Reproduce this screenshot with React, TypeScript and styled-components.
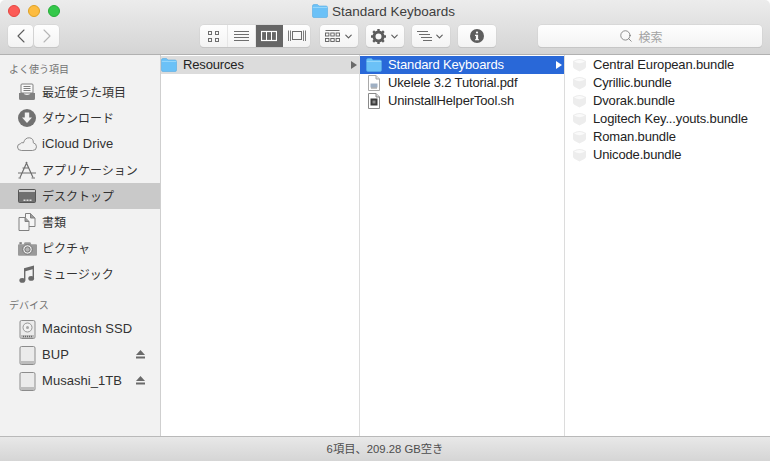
import React from 'react'
import styled, { createGlobalStyle } from 'styled-components'
import { Search, ChevronDown, ChevronLeft, ChevronRight } from 'lucide-react'

const FONT = `"Liberation Sans", "Noto Sans CJK JP", sans-serif`

const GlobalStyle = createGlobalStyle`
  html, body {
    margin: 0;
    padding: 0;
    background: #ffffff;
    overflow: hidden;
  }
  * {
    box-sizing: border-box;
  }
`
const Window = styled.div`
  width: 770px;
  height: 461px;
  display: flex;
  flex-direction: column;
  font-family: ${FONT};
  font-size: 13px;
  color: #2b2b2b;
  overflow: hidden;
`
const TitleBar = styled.div`
  height: 55px;
  flex: none;
  padding: 5px 8px 0;
  background: linear-gradient(#ececec, #d4d4d4);
  border-bottom: 1px solid #b1b1b1;
  border-radius: 5px 5px 0 0;
  display: flex;
  flex-direction: column;
`
const TitleRow = styled.div`
  height: 20px;
  padding-bottom: 8px;
  display: flex;
  align-items: center;
  position: relative;
  justify-content: center;
`
const Lights = styled.div`
  position: absolute;
  left: 0;
  top: 0;
  display: flex;
  gap: 8px;
`
const Light = styled.div<{ $color: string; $edge: string }>`
  width: 12px;
  height: 12px;
  border-radius: 50%;
  background: ${(p) => p.$color};
  border: 1px solid ${(p) => p.$edge};
`
const Title = styled.div`
  display: flex;
  align-items: center;
  gap: 4px;
  color: #3e3e3e;
  font-size: 13.5px;
  margin-left: -3px;
`
const Toolbar = styled.div`
  display: flex;
  align-items: center;
  height: 22px;
`
const Tool = styled.div<{ $w: number; $ml?: number; $muted?: boolean }>`
  width: ${(p) => p.$w}px;
  height: 22px;
  flex: none;
  margin-left: ${(p) => p.$ml ?? 0}px;
  background: linear-gradient(#fefefe, #f3f3f3);
  border-radius: 4px;
  box-shadow: 0 0 0 0.5px #cfcfcf, 0 1px 0 #bcbcbc;
  display: flex;
  align-items: center;
  justify-content: center;
  color: ${(p) => (p.$muted ? '#b5b5b5' : '#5c5c5c')};
`
const Segments = styled.div`
  display: flex;
  width: 110px;
  height: 22px;
  flex: none;
  margin-left: 141px;
  border-radius: 4px;
  overflow: hidden;
  background: linear-gradient(#fefefe, #f3f3f3);
  box-shadow: 0 0 0 0.5px #cfcfcf, 0 1px 0 #bcbcbc;
`
const Segment = styled.div<{ $on?: boolean; $w: number }>`
  width: ${(p) => p.$w}px;
  display: flex;
  align-items: center;
  justify-content: center;
  background: ${(p) => (p.$on ? '#666666' : 'transparent')};
  color: ${(p) => (p.$on ? '#ffffff' : '#6e6e6e')};
  border-right: 1px solid ${(p) => (p.$on ? '#666666' : '#e6e6e6')};
  &:last-child {
    border-right: 0;
  }
`
const Caret = styled(ChevronDown)<{ $ml: number }>`
  margin-left: ${(p) => p.$ml}px;
`
const SearchField = styled(Tool)`
  gap: 5px;
  color: #a3a3a3;
  font-size: 12px;
  padding-right: 18px;
  svg {
    color: #6d6d6d;
  }
`
const Main = styled.div`
  flex: 1;
  min-height: 0;
  display: flex;
`
const Sidebar = styled.div`
  width: 161px;
  flex: none;
  background: #f2f2f2;
  border-right: 1px solid #cfcfcf;
  padding-top: 7px;
`
const SectionHead = styled.div<{ $mt?: number; $mb?: number }>`
  height: 16px;
  line-height: 16px;
  padding-left: 9px;
  font-size: 10px;
  color: #737373;
  margin-top: ${(p) => p.$mt ?? 0}px;
  margin-bottom: ${(p) => p.$mb ?? 1}px;
`
const SideItem = styled.div<{ $on?: boolean }>`
  height: 26px;
  display: flex;
  align-items: center;
  padding-left: 17px;
  background: ${(p) => (p.$on ? '#c9c9c9' : 'transparent')};
  color: #333333;
  position: relative;
`
const SideLabel = styled.span<{ $jp?: boolean }>`
  font-size: ${(p) => (p.$jp ? 12 : 13)}px;
  letter-spacing: ${(p) => (p.$jp ? '0' : '0.05px')};
  margin-top: -2px;
`
const SideIcon = styled.span`
  width: 20px;
  height: 20px;
  margin-right: 5px;
  display: flex;
  align-items: center;
  justify-content: center;
  flex: none;
  color: #717171;
`
const Eject = styled.span`
  position: absolute;
  right: 15px;
  top: 8px;
  display: flex;
`
const Column = styled.div<{ $w: number; $last?: boolean }>`
  width: ${(p) => p.$w}px;
  flex: ${(p) => (p.$last ? 1 : 'none')};
  background: #ffffff;
  border-right: ${(p) => (p.$last ? '0' : '1px solid #dcdcdc')};
  padding-top: 1px;
`
const FileRow = styled.div<{ $sel?: 'blue' | 'gray'; $pl: number }>`
  height: 18px;
  display: flex;
  align-items: center;
  padding-left: ${(p) => p.$pl}px;
  position: relative;
  background: ${(p) => (p.$sel === 'blue' ? '#2968d8' : p.$sel === 'gray' ? '#dcdcdc' : 'transparent')};
  color: ${(p) => (p.$sel === 'blue' ? '#ffffff' : '#232323')};
  white-space: nowrap;
`
const FileName = styled.span`
  font-size: 13px;
  letter-spacing: -0.15px;
  margin-top: -2px;
`
const FileIcon = styled.span`
  width: 16px;
  height: 16px;
  flex: none;
  margin-right: 6px;
  display: flex;
  align-items: center;
  justify-content: center;
`
const Arrow = styled.span<{ $color: string }>`
  position: absolute;
  right: 2px;
  top: 5px;
  width: 0;
  height: 0;
  border-left: 6px solid ${(p) => p.$color};
  border-top: 4px solid transparent;
  border-bottom: 4px solid transparent;
`
const StatusBar = styled.div`
  height: 25px;
  flex: none;
  padding-bottom: 2px;
  border-top: 1px solid #b9b9b9;
  background: linear-gradient(#e8e8e8, #d5d5d5);
  display: flex;
  align-items: center;
  justify-content: center;
  font-size: 11.3px;
  color: #4d4d4d;
`

const FolderIcon = ({ w = 16, h = 14 }: { w?: number; h?: number }) => (
  <svg width={w} height={h} viewBox="0 0 16 14">
    <path d="M0.5 2 Q0.5 0.5 2 0.5 H5.5 L7 2 H14 Q15.5 2 15.5 3.5 V12 Q15.5 13.5 14 13.5 H2 Q0.5 13.5 0.5 12 Z" fill="#6bc1f7" stroke="#55abe4" strokeWidth="0.6" />
    <path d="M0.8 3.4 H15.2" stroke="#9bd8fb" strokeWidth="1" />
  </svg>
)
const GridIcon = () => (
  <svg width="11" height="11" viewBox="0 0 11 11" fill="none" stroke="currentColor">
    <rect x=".5" y=".5" width="3" height="3" />
    <rect x="7.5" y=".5" width="3" height="3" />
    <rect x=".5" y="7.5" width="3" height="3" />
    <rect x="7.5" y="7.5" width="3" height="3" />
  </svg>
)
const ListIcon = () => (
  <svg width="15" height="12" viewBox="0 0 15 12" stroke="currentColor">
    <path d="M0 .5H15M0 3.5H15M0 6.5H15M0 9.5H15" transform="translate(0 1)" />
  </svg>
)
const ColumnsIcon = () => (
  <svg width="16" height="12" viewBox="0 0 16 12" fill="none" stroke="currentColor">
    <rect x=".5" y="1.5" width="15" height="9" strokeWidth="1.2" />
    <path d="M5.5 1.5V10.5M10.5 1.5V10.5" />
  </svg>
)
const CoverIcon = () => (
  <svg width="20" height="12" viewBox="0 0 20 12" fill="none" stroke="currentColor">
    <rect x="5.5" y="1.5" width="9" height="8" />
    <path d="M1.5 .5V11M3.5 .5V11M16.5 .5V11M18.5 .5V11" strokeWidth=".9" />
  </svg>
)
const ArrangeIcon = () => (
  <svg width="15" height="13" viewBox="0 0 15 13" fill="none" stroke="currentColor" strokeWidth=".9">
    <path d="M.5 .5H14.5" />
    <rect x=".5" y="3" width="3.4" height="3" />
    <rect x="5.8" y="3" width="3.4" height="3" />
    <rect x="11.1" y="3" width="3.4" height="3" />
    <rect x=".5" y="8.5" width="3.4" height="3" />
    <rect x="5.8" y="8.5" width="3.4" height="3" />
    <rect x="11.1" y="8.5" width="3.4" height="3" />
  </svg>
)
const GearIcon = () => (
  <svg width="15" height="15" viewBox="0 0 15 15">
    <circle cx="7.5" cy="7.5" r="4.5" fill="none" stroke="currentColor" strokeWidth="3" />
    <path d="M7.5 0V15M0 7.5H15M2.2 2.2L12.8 12.8M12.8 2.2L2.2 12.8" stroke="currentColor" strokeWidth="2.4" strokeDasharray="2.6 9.8 2.6 0" />
  </svg>
)
const SortIcon = () => (
  <svg width="16" height="11" viewBox="0 0 16 11" stroke="currentColor" strokeWidth=".9">
    <path d="M0 .5H11M2 3.5H13M4 6.5H15M6 9.5H15" />
  </svg>
)
const InfoIcon = () => (
  <svg width="14" height="14" viewBox="0 0 14 14">
    <circle cx="7" cy="7" r="7" fill="#5e5e5e" />
    <rect x="5.9" y="2.4" width="2.2" height="2.2" rx="1" fill="#fafafa" />
    <path d="M5 5.8H8.1V10.2H9V11.3H5V10.2H5.9V6.9H5Z" fill="#fafafa" />
  </svg>
)
const RecentsIcon = () => (
  <svg width="18" height="18" viewBox="0 0 18 18">
    <path d="M4 1H14Q15 1 15 2V10H3V2Q3 1 4 1Z" fill="#fff" fillOpacity=".5" stroke="#808080" />
    <path d="M5.5 3.5H12.5M5.5 5.5H12.5M5.5 7.5H12.5" stroke="#808080" />
    <path d="M1 10H5.5Q6 12 9 12T12.5 10H17V15.5Q17 17 15.500 17H2.500Q1 17 1 15.500Z" fill="#808080" />
  </svg>
)
const DownloadIcon = () => (
  <svg width="18" height="18" viewBox="0 0 18 18">
    <circle cx="9" cy="9" r="9" fill="#717171" />
    <path d="M6.8 3.5H11.2V8.5H14L9 14L4 8.5H6.8Z" fill="#f2f2f2" />
  </svg>
)
const CloudIcon = () => (
  <svg width="20" height="14" viewBox="0 0 20 14" fill="none" stroke="#808080" strokeWidth=".9">
    <path d="M4.5 13.5Q.5 13.5 .5 10Q.5 7.2 3.3 6.8Q4.5 5 6.5 5.8Q8 .5 12.5 .8Q16.6 1.4 16.3 5.8Q19.5 6.6 19.5 9.8Q19.5 13.5 15.5 13.5Z" />
  </svg>
)
const AppsIcon = () => (
  <svg width="20" height="18" viewBox="0 0 20 18" fill="none" stroke="#6f6f6f" strokeWidth="1.2">
    <path d="M10 1L3 16.5M9 1L16 16.5M1 12H19M5.5 7H12" />
    <path d="M1.5 17H4M14.5 17H18" />
  </svg>
)
const DesktopIcon = () => (
  <svg width="18" height="14" viewBox="0 0 18 14">
    <rect x=".5" y=".5" width="17" height="13" rx="1" fill="#707070" stroke="#555555" />
    <rect x="1" y="1" width="16" height="2" fill="#cfcfcf" />
    <path d="M5.500 10.500H7.500V12H5.500ZM8.500 10.500H10.500V12H8.500ZM11.500 10.500H13.500V12H11.500Z" fill="#dedede" />
  </svg>
)
const DocsIcon = () => (
  <svg width="18" height="18" viewBox="0 0 18 18" fill="#f5f5f5" stroke="#808080">
    <path d="M7.5 .5H12.5L17 5V13.5H7.5Z" />
    <path d="M12.5 .5V5H17" fill="#9a9a9a" />
    <path d="M1 4.500H7L11 8.500V17.500H1Z" />
    <path d="M7 4.500V8.500H11" fill="#9a9a9a" />
  </svg>
)
const CameraIcon = () => (
  <svg width="19" height="15" viewBox="0 0 20 15">
    <path d="M1 3H6L7 1H13L14 3H19Q20 3 20 4V14Q20 15 19 15H1Q0 15 0 14V4Q0 3 1 3Z" fill="#9a9a9a" />
    <circle cx="10" cy="8.5" r="5" fill="#efefef" stroke="#6e6e6e" />
    <circle cx="10" cy="8.5" r="2.8" fill="#b4b4b4" stroke="#6e6e6e" />
    <path d="M1.500 .8H4V3H1.500Z" fill="#808080" />
  </svg>
)
const MusicIcon = () => (
  <svg width="16" height="18" viewBox="0 0 16 18" fill="#6a6a6a">
    <path d="M5 3.2L15 .5V13.5H13.6V4.2L6.4 6.2V15.5H5Z" />
    <ellipse cx="3.3" cy="15.4" rx="2.9" ry="2.4" />
    <ellipse cx="12.2" cy="13.4" rx="2.9" ry="2.4" />
  </svg>
)
const DiskIcon = ({ ssd }: { ssd?: boolean }) => (
  <svg width="17" height="19" viewBox="0 0 17 19">
    <path d="M2.500 .5H14.500Q16 .5 16 2V17Q16 18.500 14.500 18.500H2.500Q1 18.500 1 17V2Q1 .5 2.500 .5Z" fill="#ebebeb" stroke="#8c8c8c" />
    <path d="M1.500 15H15.500V17Q15.500 18 14.500 18H2.500Q1.500 18 1.500 17Z" fill="#bdbdbd" />
    {ssd && <circle cx="8.5" cy="7.5" r="4.5" fill="#f1f1f1" stroke="#959595" />}
    {ssd && <circle cx="8.5" cy="7.5" r="1.5" fill="#a5a5a5" />}
    {ssd && <path d="M4 16.500H13" stroke="#666666" strokeWidth="1.5" strokeDasharray="1 1" />}
  </svg>
)
const EjectIcon = () => (
  <svg width="9" height="9" viewBox="0 0 9 9" fill="#6a6a6a">
    <path d="M4.5 0L9 5H0Z" />
    <rect y="6.5" width="9" height="2" />
  </svg>
)
const PdfIcon = () => (
  <svg width="12" height="16" viewBox="0 0 12 16">
    <path d="M.5 .5H8L11.500 4V15.500H.5Z" fill="#fff" stroke="#a9a9a9" />
    <path d="M8 .5V4H11.500" fill="#e2e2e2" stroke="#a9a9a9" />
    <rect x="2.500" y="8.500" width="7" height="4" fill="#9fb0c4" />
    <path d="M3 13H9" stroke="#8a8a8a" />
  </svg>
)
const ShellIcon = () => (
  <svg width="12" height="16" viewBox="0 0 12 16">
    <path d="M.5 .5H8L11.500 4V15.500H.5Z" fill="#fff" stroke="#8a8a8a" />
    <path d="M8 .5V4H11.500" fill="#ddd" stroke="#8a8a8a" />
    <rect x="2.500" y="5.500" width="7" height="7" fill="#3b3b3b" />
    <rect x="4.500" y="7.500" width="3" height="3" fill="#8b8b8b" />
  </svg>
)
const BundleIcon = () => (
  <svg width="15" height="14" viewBox="0 0 15 14">
    <path d="M1 3Q7.500 -1 14 3V9Q14 10.500 7.500 13.500Q1 10.500 1 9Z" fill="#ededed" />
    <path d="M2 3.500Q7.500 7 13 3.500Q7.500 .5 2 3.500Z" fill="#fafafa" />
  </svg>
)

const favorites = [
  { label: '最近使った項目', icon: <RecentsIcon />, jp: true },
  { label: 'ダウンロード', icon: <DownloadIcon />, jp: true },
  { label: 'iCloud Drive', icon: <CloudIcon /> },
  { label: 'アプリケーション', icon: <AppsIcon />, jp: true },
  { label: 'デスクトップ', icon: <DesktopIcon />, jp: true, on: true },
  { label: '書類', icon: <DocsIcon />, jp: true },
  { label: 'ピクチャ', icon: <CameraIcon />, jp: true },
  { label: 'ミュージック', icon: <MusicIcon />, jp: true },
]
const devices = [
  { label: 'Macintosh SSD', ssd: true },
  { label: 'BUP', eject: true },
  { label: 'Musashi_1TB', eject: true },
]
const bundles = [
  'Central European.bundle',
  'Cyrillic.bundle',
  'Dvorak.bundle',
  'Logitech Key...youts.bundle',
  'Roman.bundle',
  'Unicode.bundle',
]

const App: React.FC = () => {
  return (
    <Window>
      <GlobalStyle />
      <TitleBar>
        <TitleRow>
          <Lights>
            <Light $color="#fc5b57" $edge="#e5453f" />
            <Light $color="#fdbc40" $edge="#dfa123" />
            <Light $color="#34c84a" $edge="#25ac38" />
          </Lights>
          <Title>
            <FolderIcon />
            Standard Keyboards
          </Title>
        </TitleRow>
        <Toolbar>
          <Tool $w={25}>
            <ChevronLeft size={24} strokeWidth={1.1} />
          </Tool>
          <Tool $w={25} $ml={1} $muted>
            <ChevronRight size={24} strokeWidth={1.1} />
          </Tool>
          <Segments>
            <Segment $w={28}>
              <GridIcon />
            </Segment>
            <Segment $w={28}>
              <ListIcon />
            </Segment>
            <Segment $w={27} $on>
              <ColumnsIcon />
            </Segment>
            <Segment $w={27}>
              <CoverIcon />
            </Segment>
          </Segments>
          <Tool $w={38} $ml={10}>
            <ArrangeIcon />
            <Caret size={11} strokeWidth={2.5} $ml={3} />
          </Tool>
          <Tool $w={38} $ml={8}>
            <GearIcon />
            <Caret size={11} strokeWidth={2.5} $ml={3} />
          </Tool>
          <Tool $w={38} $ml={8}>
            <SortIcon />
            <Caret size={11} strokeWidth={2.5} $ml={1} />
          </Tool>
          <Tool $w={38} $ml={8}>
            <InfoIcon />
          </Tool>
          <SearchField $w={224} $ml={42}>
            <Search size={14} strokeWidth={1.3} />
            検索
          </SearchField>
        </Toolbar>
      </TitleBar>
      <Main>
        <Sidebar>
          <SectionHead>よく使う項目</SectionHead>
          {favorites.map((f) => (
            <SideItem key={f.label} $on={f.on}>
              <SideIcon>{f.icon}</SideIcon>
              <SideLabel $jp={f.jp}>{f.label}</SideLabel>
            </SideItem>
          ))}
          <SectionHead $mt={11} $mb={2}>
            デバイス
          </SectionHead>
          {devices.map((d) => (
            <SideItem key={d.label}>
              <SideIcon>
                <DiskIcon ssd={d.ssd} />
              </SideIcon>
              <SideLabel>{d.label}</SideLabel>
              {d.eject ? (
                <Eject>
                  <EjectIcon />
                </Eject>
              ) : null}
            </SideItem>
          ))}
        </Sidebar>
        <Column $w={199}>
          <FileRow $sel="gray" $pl={0}>
            <FileIcon>
              <FolderIcon />
            </FileIcon>
            <FileName>Resources</FileName>
            <Arrow $color="#6a6a6a" />
          </FileRow>
        </Column>
        <Column $w={205}>
          <FileRow $sel="blue" $pl={6}>
            <FileIcon>
              <FolderIcon />
            </FileIcon>
            <FileName>Standard Keyboards</FileName>
            <Arrow $color="#ffffff" />
          </FileRow>
          <FileRow $pl={6}>
            <FileIcon>
              <PdfIcon />
            </FileIcon>
            <FileName>Ukelele 3.2 Tutorial.pdf</FileName>
          </FileRow>
          <FileRow $pl={6}>
            <FileIcon>
              <ShellIcon />
            </FileIcon>
            <FileName>UninstallHelperTool.sh</FileName>
          </FileRow>
        </Column>
        <Column $w={205} $last>
          {bundles.map((b) => (
            <FileRow key={b} $pl={6}>
              <FileIcon>
                <BundleIcon />
              </FileIcon>
              <FileName>{b}</FileName>
            </FileRow>
          ))}
        </Column>
      </Main>
      <StatusBar>6項目、209.28 GB空き</StatusBar>
    </Window>
  )
}

export default App
